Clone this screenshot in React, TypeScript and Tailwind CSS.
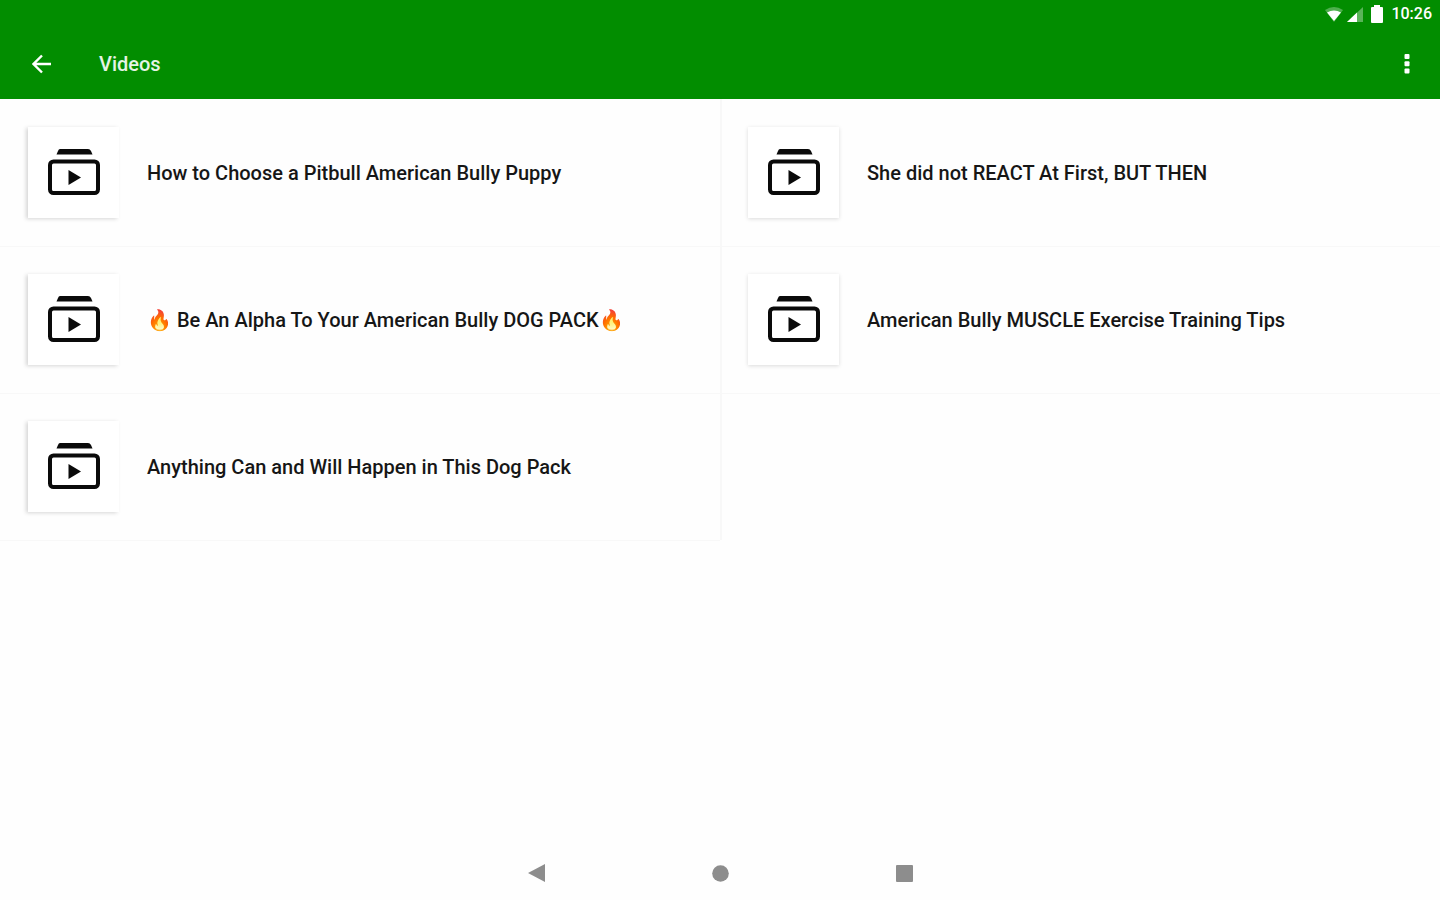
interface Video {
  id: number;
  title: string;
}

const videos: Video[] = [
  { id: 1, title: 'How to Choose a Pitbull American Bully Puppy' },
  { id: 2, title: 'She did not REACT At First, BUT THEN' },
  { id: 3, title: '🔥 Be An Alpha To Your American Bully DOG PACK🔥' },
  { id: 4, title: 'American Bully MUSCLE Exercise Training Tips' },
  { id: 5, title: 'Anything Can and Will Happen in This Dog Pack' },
];

function StatusBar() {
  return (
    <div className="flex h-7 items-center justify-end pr-2">
      <svg width="18" height="15" viewBox="0 0 18 15" className="mr-1">
        <path d="M0 3Q9-3 18 3L9 15Z" fill="#fff" fillOpacity="0.3" />
        <path d="M2 5.5Q9 1.5 16 5.5L9 14Z" fill="#fff" />
      </svg>
      <svg width="16" height="15" viewBox="0 0 16 15" className="mr-2">
        <path d="M0 15L16 0V15Z" fill="#fff" fillOpacity="0.35" />
        <path d="M0 15L10 5.5V15Z" fill="#fff" />
      </svg>
      <svg width="12" height="18" viewBox="0 0 12 18" className="mr-2">
        <path d="M3 0h6v2h2q1 0 1 1v14q0 1-1 1H1q-1 0-1-1V3q0-1 1-1h2Z" fill="#fff" />
      </svg>
      <span className="text-base leading-7 font-medium">10:26</span>
    </div>
  );
}

function AppBar() {
  return (
    <div className="flex h-[71px] items-center pr-5 pl-8">
      <button type="button" aria-label="Back">
        <svg width="19" height="20" viewBox="0 0 19 20" fill="none" stroke="#fff" strokeWidth="2.4">
          <path d="M19 10H2M10 1.5L1.5 10L10 18.5" />
        </svg>
      </button>
      <h1 className="ml-12 flex-1 text-xl leading-7 font-medium text-white/90">Videos</h1>
      <button type="button" aria-label="More options" className="px-1">
        <svg width="18" height="20" viewBox="0 0 18 20" fill="#fff">
          <rect x="6.5" y="0" width="5" height="5" rx="1" />
          <rect x="6.5" y="7.3" width="5" height="5" rx="1" />
          <rect x="6.5" y="14.6" width="5" height="5" rx="1" />
        </svg>
      </button>
    </div>
  );
}

function Thumbnail() {
  return (
    <div className="flex size-[91px] shrink-0 items-center justify-center bg-white pb-0.5 shadow-[0_1px_4px_rgba(0,0,0,0.14)] group-odd:shadow-[-2px_1px_4px_rgba(0,0,0,0.16)]">
      <svg width="52" height="46" viewBox="0 0 52 46">
        <path d="M12 0h28q2 0 3 2l1.5 3.5h-36L10 2q.7-2 2-2Z" fill="#0a0a0a" />
        <rect x="2" y="12.5" width="48" height="31.5" rx="3.5" fill="none" stroke="#0a0a0a" strokeWidth="4" />
        <path d="M20.5 21V36L33 28.5Z" fill="#0a0a0a" />
      </svg>
    </div>
  );
}

function VideoItem({ video }: { video: Video }) {
  return (
    <a
      href={`#video-${video.id}`}
      className="group flex h-[147px] items-center gap-7 pr-6 pl-7 shadow-[2px_0_0_#f8f8f8,0_1px_0_#f8f8f8]"
    >
      <Thumbnail />
      <span className="text-xl leading-7 font-medium text-[#161616]">{video.title}</span>
    </a>
  );
}

function NavigationBar() {
  return (
    <nav className="flex h-[54px] items-center justify-center gap-40">
      <button type="button" aria-label="Back" className="flex w-6 justify-center">
        <svg width="18" height="18" viewBox="0 0 18 18" fill="#8d8d8d">
          <path d="M1 9L18 0V18Z" />
        </svg>
      </button>
      <button type="button" aria-label="Home" className="flex w-6 justify-center">
        <svg width="17" height="17" viewBox="0 0 17 17" fill="#8d8d8d">
          <circle cx="8.5" cy="8.5" r="8.3" />
        </svg>
      </button>
      <button type="button" aria-label="Recent apps" className="flex w-6 justify-center">
        <svg width="17" height="17" viewBox="0 0 17 17" fill="#8d8d8d">
          <rect width="17" height="17" rx="1" />
        </svg>
      </button>
    </nav>
  );
}

export default function App() {
  return (
    <div className="flex min-h-screen flex-col bg-[#fefefe] font-['Roboto',sans-serif]">
      <header className="bg-[#028d00] text-white">
        <StatusBar />
        <AppBar />
      </header>
      <main className="grid flex-1 grid-cols-2 content-start">
        {videos.map((video) => (
          <VideoItem key={video.id} video={video} />
        ))}
      </main>
      <NavigationBar />
    </div>
  );
}
